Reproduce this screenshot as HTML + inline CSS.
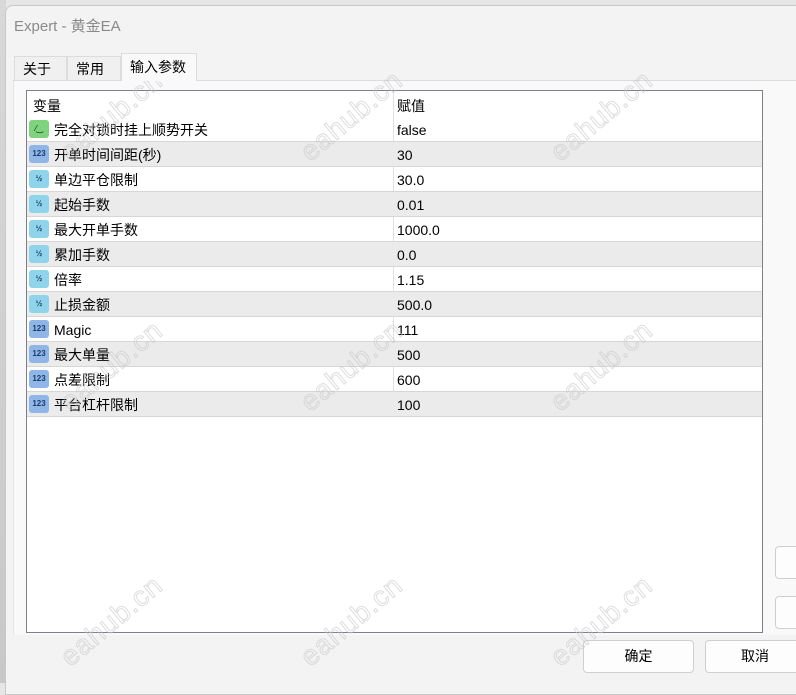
<!DOCTYPE html>
<html><head><meta charset="utf-8"><style>
*{margin:0;padding:0;box-sizing:border-box}
body{width:796px;height:683px;overflow:hidden;background:#e6e6e6;position:relative;font-family:"Liberation Sans","Noto Sans CJK SC",sans-serif;font-size:14px;color:#000}
.strip{position:absolute;left:0;top:0;width:6px;height:683px;background:linear-gradient(#d8d8d8,#c8c8c8)}
.win{position:absolute;left:5px;top:5px;width:800px;height:690px;background:#f3f3f3;border:1px solid #c8c8c8;border-radius:8px 0 0 0}
.title{position:absolute;left:8px;top:9px;font-size:15px;color:#8a8a8a}
.tab{position:absolute;top:56px;height:25px;border:1px solid #dcdcdc;border-bottom:none;background:#f0f0f0;padding-left:8px;line-height:25px;font-size:14px}
.panel{position:absolute;left:13px;top:80px;width:800px;height:555px;background:#f9f9f9;border-top:1px solid #dcdcdc;border-left:1px solid #e4e4e4}
.list{position:absolute;left:26px;top:90px;width:737px;height:543px;background:#fff;border:1px solid #7b8089}
.row{position:absolute;left:0;width:735px;height:25px;border-bottom:1px solid #d6d6d6}
.row.g{background:#ebebeb}
.row span{position:absolute;top:1px;line-height:24px;height:24px}
.n{left:27px}.v{left:370px}
.sep{position:absolute;left:366px;top:0;width:1px;height:326px;background:#e0e0e0}
.ic{position:absolute;left:2px;top:3px;width:20px;height:18px;border-radius:3px;font-size:8px;font-weight:bold;color:#1a3d6b;text-align:center;line-height:18px}
.btn{position:absolute;height:33px;background:#fdfdfd;border:1px solid #cfcfcf;border-radius:4px;text-align:center;line-height:31px;font-size:14px}
.wm{position:absolute;font-size:28px;color:transparent;-webkit-text-stroke:1px rgba(200,200,200,.6);transform:rotate(-40deg);font-family:"Liberation Sans",sans-serif;letter-spacing:1px}
</style></head><body>
<div class="strip"></div>
<div class="win">
<div class="title">Expert - 黄金EA</div>
</div>
<div class="tab" style="left:14px;width:53px">关于</div>
<div class="tab" style="left:67px;width:54px">常用</div>
<div class="panel"></div>
<div class="tab" style="left:121px;width:76px;top:53px;height:28px;line-height:27px;background:#f9f9f9;z-index:2">输入参数</div>
<div class="list">
<div class="sep"></div>
<div class="row" style="top:0;border:none"><span style="left:6px;top:3px">变量</span><span class="v" style="top:3px">赋值</span></div>
<div class="row" style="top:26px"><div class="ic" style="background:#7fd37f;color:#155515">⁄‿</div><span class="n">完全对锁时挂上顺势开关</span><span class="v">false</span></div>
<div class="row g" style="top:51px"><div class="ic" style="background:#8fb6e6">123</div><span class="n">开单时间间距(秒)</span><span class="v">30</span></div>
<div class="row" style="top:76px"><div class="ic" style="background:#8fd4ea">½</div><span class="n">单边平仓限制</span><span class="v">30.0</span></div>
<div class="row g" style="top:101px"><div class="ic" style="background:#8fd4ea">½</div><span class="n">起始手数</span><span class="v">0.01</span></div>
<div class="row" style="top:126px"><div class="ic" style="background:#8fd4ea">½</div><span class="n">最大开单手数</span><span class="v">1000.0</span></div>
<div class="row g" style="top:151px"><div class="ic" style="background:#8fd4ea">½</div><span class="n">累加手数</span><span class="v">0.0</span></div>
<div class="row" style="top:176px"><div class="ic" style="background:#8fd4ea">½</div><span class="n">倍率</span><span class="v">1.15</span></div>
<div class="row g" style="top:201px"><div class="ic" style="background:#8fd4ea">½</div><span class="n">止损金额</span><span class="v">500.0</span></div>
<div class="row" style="top:226px"><div class="ic" style="background:#8fb6e6">123</div><span class="n">Magic</span><span class="v">111</span></div>
<div class="row g" style="top:251px"><div class="ic" style="background:#8fb6e6">123</div><span class="n">最大单量</span><span class="v">500</span></div>
<div class="row" style="top:276px"><div class="ic" style="background:#8fb6e6">123</div><span class="n">点差限制</span><span class="v">600</span></div>
<div class="row g" style="top:301px"><div class="ic" style="background:#8fb6e6">123</div><span class="n">平台杠杆限制</span><span class="v">100</span></div>
</div>
<div class="btn" style="left:583px;top:640px;width:111px">确定</div>
<div class="btn" style="left:705px;top:640px;width:100px">取消</div>
<div class="btn" style="left:775px;top:546px;width:40px"></div>
<div class="btn" style="left:775px;top:596px;width:40px"></div>
<div class="wm" style="left:50px;top:100px">eahub.cn</div>
<div class="wm" style="left:290px;top:100px">eahub.cn</div>
<div class="wm" style="left:540px;top:100px">eahub.cn</div>
<div class="wm" style="left:50px;top:350px">eahub.cn</div>
<div class="wm" style="left:290px;top:350px">eahub.cn</div>
<div class="wm" style="left:540px;top:350px">eahub.cn</div>
<div class="wm" style="left:50px;top:605px">eahub.cn</div>
<div class="wm" style="left:290px;top:605px">eahub.cn</div>
<div class="wm" style="left:540px;top:605px">eahub.cn</div>
</body></html>
